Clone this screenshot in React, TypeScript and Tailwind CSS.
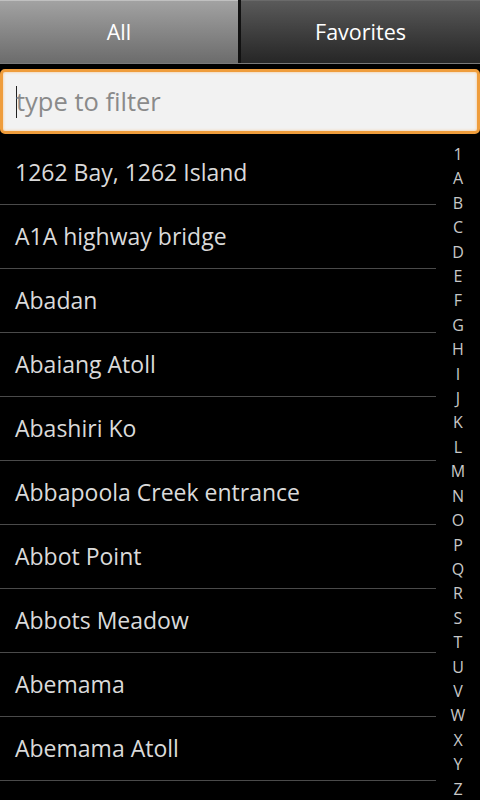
const places = [
  '1262 Bay, 1262 Island',
  'A1A highway bridge',
  'Abadan',
  'Abaiang Atoll',
  'Abashiri Ko',
  'Abbapoola Creek entrance',
  'Abbot Point',
  'Abbots Meadow',
  'Abemama',
  'Abemama Atoll',
];

const letters = ['1', ...'ABCDEFGHIJKLMNOPQRSTUVWXYZ'.split('')];

export default function App() {
  return (
    <div
      className="w-[480px] h-[800px] bg-black overflow-hidden flex flex-col"
      style={{ fontFamily: '"Open Sans", "Noto Sans", sans-serif' }}
    >
      {/* Tabs */}
      <div className="flex h-[64px] shrink-0 border-b border-[#7a7a7a]">
        <div className="w-[238px] flex items-center justify-center pt-[1px] bg-gradient-to-b from-[#a2a2a2] to-[#6c6c6c] text-white text-[21.5px] border-t border-[#c0c0c0]">
          All
        </div>
        <div className="w-[3px] bg-[#111]" />
        <div className="flex-1 flex items-center justify-center pt-[1px] bg-gradient-to-b from-[#5a5a5a] to-[#262626] text-white text-[21.5px] border-t border-[#6a6a6a]">
          Favorites
        </div>
      </div>

      {/* Filter input */}
      <div className="pt-[5px] pb-[7px] shrink-0">
        <div className="h-[65px] rounded-[5px] border-[3px] border-[#ef9d3c] bg-[#f2f2f2] flex items-center pl-[13px] shadow-[inset_0_0_3px_#f7c48a]">
          <div className="w-[1px] h-[32px] bg-[#222]" />
          <span className="text-[25.5px] text-[#8a8a8a] -ml-[1px]">type to filter</span>
        </div>
      </div>

      {/* List + index */}
      <div className="flex flex-1 min-h-0">
        <div className="w-[436px] flex flex-col">
          {places.map((p) => (
            <div
              key={p}
              className="h-[64px] shrink-0 flex items-center pl-[15px] border-b border-[#4a4a4a] text-[23px] text-[#dadada]"
            >
              {p}
            </div>
          ))}
        </div>
        <div className="flex-1 flex flex-col items-center pt-[1px]">
          {letters.map((l) => (
            <div key={l} className="h-[24.42px] leading-[24.42px] text-[16px] text-[#c8c8c8]">
              {l}
            </div>
          ))}
        </div>
      </div>
    </div>
  );
}
